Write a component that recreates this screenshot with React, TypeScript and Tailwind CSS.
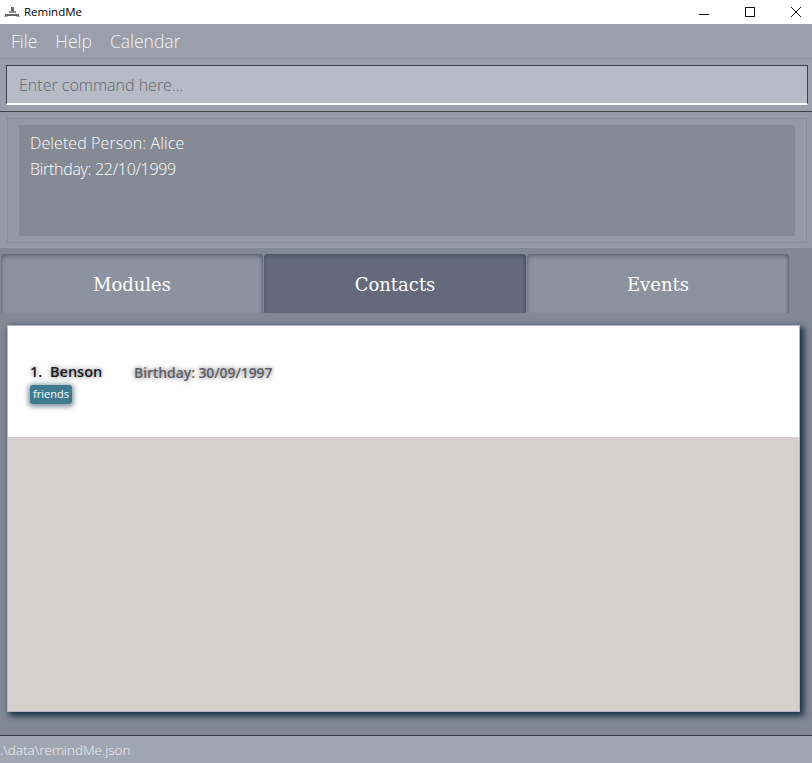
const tabs = [
  { name: "Modules", active: false },
  { name: "Contacts", active: true },
  { name: "Events", active: false },
];

const lightFont = "font-['Open_Sans','Noto_Sans',sans-serif] font-light";

function AppIcon() {
  return (
    <svg width="16" height="12" viewBox="0 0 16 12" className="ml-[4px]">
      <rect x="7" y="1" width="3" height="4" fill="#666" />
      <rect x="5" y="5" width="7" height="2" fill="#888" />
      <rect x="1" y="8" width="14" height="2" fill="#666" />
      <rect x="0" y="10" width="4" height="1" fill="#aaa" />
      <rect x="12" y="10" width="4" height="1" fill="#aaa" />
    </svg>
  );
}

function TitleBar() {
  return (
    <div className="flex h-[24px] items-center bg-white">
      <AppIcon />
      <span className="ml-[4px] text-[11.5px] text-black font-['Open_Sans',sans-serif]">RemindMe</span>
      <div className="ml-auto flex items-center">
        <svg width="12" height="12" viewBox="0 0 12 12" className="mr-[33px]">
          <path d="M0 8.5H10" stroke="#111" fill="none" />
        </svg>
        <svg width="12" height="12" viewBox="0 0 12 12" className="mr-[34px]">
          <rect x="1.5" y="1.5" width="9" height="9" stroke="#111" fill="none" />
        </svg>
        <svg width="12" height="12" viewBox="0 0 12 12" className="mr-[10px]">
          <path d="M1 1L11 11M11 1L1 11" stroke="#111" fill="none" />
        </svg>
      </div>
    </div>
  );
}

function MenuBar() {
  return (
    <div className={`flex h-[35px] items-center gap-[18px] border-b border-[#8f939f] bg-[#9b9fab] pl-[11px] text-[17.5px] text-[#f2f4f6] ${lightFont}`}>
      <span>File</span>
      <span>Help</span>
      <span>Calendar</span>
    </div>
  );
}

function CommandBox() {
  return (
    <div className="h-[53px] border-b border-[#3c4048] bg-[#9b9fab] pt-[6px] pr-[4px] pb-[6px] pl-[6px]">
      <div className={`flex h-[40px] items-center border border-b-2 border-[#3d4049] border-b-white bg-[#b7bbc5] pl-[12px] text-[16px] text-[#63666e] ${lightFont}`}>
        Enter command here...
      </div>
    </div>
  );
}

function ResultPanel() {
  return (
    <div className="h-[136px] bg-[#9599a5] pt-[6px] pr-[5px] pl-[7px]">
      <div className="h-[125px] border border-[#888c98] px-[11px] pt-[6px]">
        <div className={`h-[111px] bg-[#858a95] pt-[5px] pl-[11px] text-[16px] leading-[26px] text-white ${lightFont}`}>
          <div className="tracking-[0.1px]">Deleted Person: Alice</div>
          <div className="tracking-[-0.3px]">Birthday: 22/10/1999</div>
        </div>
      </div>
    </div>
  );
}

function TabBar() {
  return (
    <div className="flex h-[59px] gap-[1px] pr-[23px] pl-[1px]">
      {tabs.map(tab => (
        <div
          key={tab.name}
          className={`flex flex-1 items-center justify-center rounded-t-[4px] pt-[1px] text-[18px] text-white font-['DejaVu_Serif',serif] shadow-[inset_0_3px_4px_-1px_rgba(60,66,90,0.55),inset_-3px_0_3px_-2px_rgba(60,66,90,0.5),inset_3px_0_3px_-2px_rgba(60,66,90,0.25)] ${
            tab.active ? "bg-[#646a7b]" : "bg-[#8d92a1]"
          }`}
        >
          {tab.name}
        </div>
      ))}
    </div>
  );
}

function ContactCard() {
  return (
    <div className="h-[111px] bg-white pt-[38px] pl-[22px] font-['Open_Sans',sans-serif]">
      <div className="flex h-[16px] items-center [text-shadow:0_0_5px_rgba(0,0,0,0.6)]">
        <span className="w-[20px] text-[14.5px] font-semibold text-[#16181c]">1.</span>
        <span className="w-[84px] text-[14.5px] font-semibold text-[#16181c]">Benson</span>
        <span className="text-[14px] font-semibold tracking-[-0.1px] text-[#5c5f66]">Birthday: 30/09/1997</span>
      </div>
      <span className="inline-block h-[19px] rounded-[3px] bg-[#3e7b91] px-[3px] text-[11px] leading-[18px] text-white shadow-[0_1px_5px_2px_rgba(40,70,85,0.55)]">
        friends
      </span>
    </div>
  );
}

export default function App() {
  return (
    <div className="flex h-[763px] w-[812px] flex-col overflow-hidden bg-[#828896]">
      <TitleBar />
      <MenuBar />
      <CommandBox />
      <ResultPanel />
      <div className="h-[6px]" />
      <TabBar />
      <div className="flex-1 px-[7px] pt-[12px]">
        <div className="h-[387px] w-[793px] border border-[#b4b6c2] bg-[#d6d1ce] shadow-[3px_3px_6px_1px_rgba(25,50,70,1)]">
          <ContactCard />
        </div>
      </div>
      <div className={`h-[28px] border-t border-[#3c4048] bg-[#a0a5b2] text-[13.5px] leading-[28px] text-[#f2f4f6] ${lightFont}`}>
        .\data\remindMe.json
      </div>
    </div>
  );
}
